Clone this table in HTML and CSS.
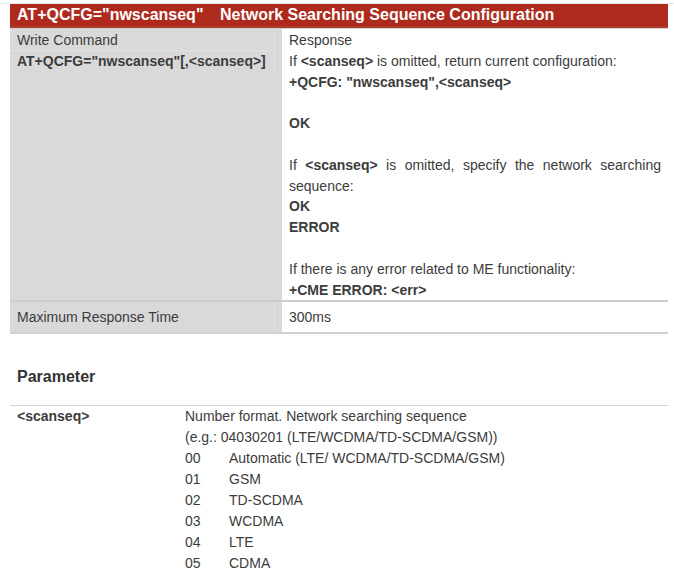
FILE: index.html
```html
<!DOCTYPE html>
<html>
<head>
<meta charset="utf-8">
<link rel="stylesheet" href="styles.css">
</head>
<body>
<div class="page">
  <div class="cmd-table">
    <div class="cmd-head">
      <span class="cmd-name">AT+QCFG="nwscanseq"</span>
      <span class="cmd-title">Network Searching Sequence Configuration</span>
    </div>
    <div class="row row-main">
      <div class="cell-left">
        <div class="sub">Write Command</div>
        <div class="sub b">AT+QCFG="nwscanseq"[,&lt;scanseq&gt;]</div>
      </div>
      <div class="cell-right">
        <p>Response</p>
        <p>If <b>&lt;scanseq&gt;</b> is omitted, return current configuration:</p>
        <p><b>+QCFG: "nwscanseq",&lt;scanseq&gt;</b></p>
        <p>&nbsp;</p>
        <p><b>OK</b></p>
        <p>&nbsp;</p>
        <p class="just">If <b>&lt;scanseq&gt;</b> is omitted, specify the network searching sequence:</p>
        <p><b>OK</b></p>
        <p><b>ERROR</b></p>
        <p>&nbsp;</p>
        <p>If there is any error related to ME functionality:</p>
        <p><b>+CME ERROR: &lt;err&gt;</b></p>
      </div>
    </div>
    <div class="row row-time">
      <div class="cell-left"><div class="sub">Maximum Response Time</div></div>
      <div class="cell-right"><p>300ms</p></div>
    </div>
  </div>

  <h2 class="section">Parameter</h2>

  <div class="param">
    <div class="param-name">&lt;scanseq&gt;</div>
    <div class="param-desc">
      <p>Number format. Network searching sequence</p>
      <p>(e.g.: 04030201 (LTE/WCDMA/TD-SCDMA/GSM))</p>
      <div class="opt"><span class="code">00</span><span>Automatic (LTE/ WCDMA/TD-SCDMA/GSM)</span></div>
      <div class="opt"><span class="code">01</span><span>GSM</span></div>
      <div class="opt"><span class="code">02</span><span>TD-SCDMA</span></div>
      <div class="opt"><span class="code">03</span><span>WCDMA</span></div>
      <div class="opt"><span class="code">04</span><span>LTE</span></div>
      <div class="opt"><span class="code">05</span><span>CDMA</span></div>
    </div>
  </div>
</div>
</body>
</html>
```

FILE: styles.css
```css
html, body {
  margin: 0;
  padding: 0;
  background: #ffffff;
}
body {
  font-family: "Liberation Sans", Arial, sans-serif;
  font-size: 14px;
  color: #3c3c3c;
  border-top: 1px solid #e6e6e6;
  margin-top: 3px;
  overflow: hidden;
}
.page {
  padding: 0 6px 0 10px;
}
p { margin: 0; }
b, .b { font-weight: bold; }

.cmd-head {
  background: #ad2a1c;
  color: #ffffff;
  font-weight: bold;
  font-size: 16px;
  height: 24px;
  line-height: 22px;
  padding-left: 7px;
  box-sizing: border-box;
  border-bottom: 2px solid #b03c30;
  white-space: nowrap;
}
.cmd-name { margin-right: 12px; }

.row {
  display: grid;
  grid-template-columns: 272px 1fr;
  border-top: 1px solid #cfcfcf;
}
.row-time {
  border-top: 2px solid #cdcdcd;
  border-bottom: 2px solid #d0d0d0;
}
.cell-left {
  background: #d9d9d9;
}
.cell-right {
  padding: 0 7px;
}
.row-main .cell-left {
  padding-top: 1px;
}
.row-main .cell-left .sub {
  width: 257px;
  padding-left: 7px;
  height: 21px;
  line-height: 21px;
  border-right: 1px solid #e2e2e2;
}
.row-main .cell-left .sub:first-child {
  border-bottom: 1px solid #e2e2e2;
  height: 20px;
}
.row-main .cell-right {
  padding-top: 1px;
  line-height: 20.8px;
}
.just {
  text-align: justify;
}
.row-time .cell-left .sub {
  width: 257px;
  padding-left: 7px;
  height: 30px;
  line-height: 30px;
  border-right: 1px solid #e2e2e2;
}
.row-time .cell-right p {
  line-height: 30px;
}

.section {
  font-size: 16px;
  font-weight: bold;
  margin: 32px 0 0 7px;
  height: 21px;
  line-height: 21px;
  color: #333333;
}
.param {
  margin-top: 18px;
  border-top: 1px solid #d6d6d6;
  display: grid;
  grid-template-columns: 175px 1fr;
  line-height: 21px;
}
.param-name {
  font-weight: bold;
  padding-left: 7px;
}
.opt {
  display: flex;
}
.code {
  width: 44px;
}
```
